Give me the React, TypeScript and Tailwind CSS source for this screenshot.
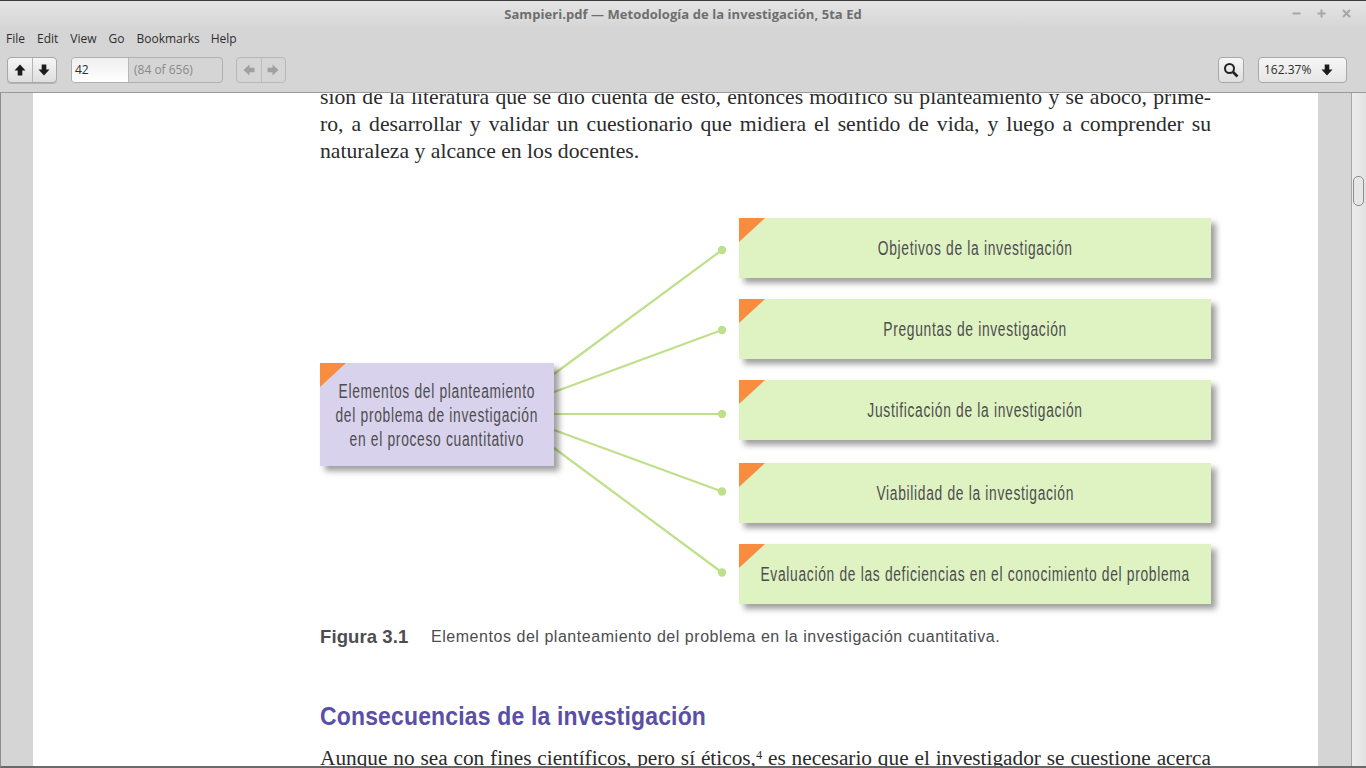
const serif = "font-['Liberation_Serif',serif]";
const narrow = "font-['Liberation_Sans',sans-serif]";

function Arrow({ dir, color = "#1c1c1c" }: { dir: "up" | "down" | "left" | "right"; color?: string }) {
  const rot = { up: 0, down: 180, left: 270, right: 90 }[dir];
  return (
    <svg width="12" height="12" viewBox="0 0 12 12" style={{ transform: `rotate(${rot}deg)` }}>
      <path d="M6 0.5 L11.5 6.5 H8.3 V11.5 H3.7 V6.5 H0.5 Z" fill={color} />
    </svg>
  );
}

function Line({ children, last }: { children: React.ReactNode; last?: boolean }) {
  return <div className={last ? "" : "[text-align:justify] [text-align-last:justify]"}>{children}</div>;
}

function GreenBox({ text, mt }: { text: string; mt: string }) {
  return (
    <div className={`relative ${mt} flex h-[60px] w-[472px] items-center justify-center bg-[#dff2c2] shadow-[5px_5px_6px_rgba(0,0,0,0.38)]`}>
      <div className="absolute left-0 top-0 h-[24px] w-[26px] bg-[#f98d3f] [clip-path:polygon(0_0,100%_0,0_100%)]" />
      <span className={`${narrow} inline-block shrink-0 scale-x-[0.69] whitespace-nowrap text-[20px] tracking-[1px] text-[#4d4d4f]`}>{text}</span>
    </div>
  );
}

export default function App() {
  const lines = [
    [554, 374, 722, 250],
    [554, 392, 722, 330],
    [554, 414, 722, 414],
    [554, 430, 722, 491.5],
    [554, 448, 722, 572.5],
  ];
  return (
    <div className="flex h-[768px] w-[1366px] flex-col overflow-hidden bg-[#d5d5d5] font-['Open_Sans',sans-serif]">
      {/* title bar */}
      <div className="relative flex h-[28px] shrink-0 items-center justify-center border-t border-[#3c3c3c] bg-gradient-to-b from-[#e4e4e4] to-[#d6d6d6]">
        <span className="text-[13px] font-bold tracking-[0.06px] text-[#6e6e6e]">Sampieri.pdf — Metodología de la investigación, 5ta Ed</span>
        <div className="absolute right-[15px] top-[8px] flex items-center gap-[16px]">
          <svg width="9" height="9" viewBox="0 0 9 9"><rect x="0.5" y="3.5" width="8" height="2" fill="#a6a6a6" /></svg>
          <svg width="9" height="9" viewBox="0 0 9 9"><path d="M3.5 0.5h2v3h3v2h-3v3h-2v-3h-3v-2h3z" fill="#a6a6a6" /></svg>
          <svg width="9" height="9" viewBox="0 0 9 9"><path d="M1 1 L8 8 M8 1 L1 8" stroke="#a6a6a6" strokeWidth="2" /></svg>
        </div>
      </div>
      {/* menu */}
      <div className="flex h-[21px] shrink-0 items-center gap-[12px] pl-[6px] text-[12px] text-[#2e2e2e]">
        <span>File</span><span>Edit</span><span>View</span><span>Go</span><span>Bookmarks</span><span className="-ml-[1px]">Help</span>
      </div>
      {/* toolbar */}
      <div className="flex h-[44px] shrink-0 items-start border-b border-[#9a9a9a] pl-[7px] pr-[19px] pt-[8px]">
        <div className="flex h-[26px] w-[50px] rounded-[4px] border border-[#a8a8a8] bg-gradient-to-b from-[#f6f6f6] to-[#dedede] shadow-[0_1px_0_rgba(0,0,0,0.15)]">
          <div className="flex flex-1 items-center justify-center border-r border-[#b5b5b5]"><Arrow dir="up" /></div>
          <div className="flex flex-1 items-center justify-center"><Arrow dir="down" /></div>
        </div>
        <div className="ml-[14px] flex h-[26px] w-[152px] rounded-[4px] border border-[#b0b0b0] text-[12px]">
          <div className="flex w-[57px] items-center rounded-l-[3px] border-r border-[#b8b8b8] bg-gradient-to-b from-[#efefef] to-white pl-[3px] text-[#2e2e2e]">42</div>
          <div className="flex flex-1 items-center pl-[5px] text-[#8a8a8a]">(84 of 656)</div>
        </div>
        <div className="ml-[13px] flex h-[26px] w-[50px] rounded-[4px] border border-[#b8b8b8]">
          <div className="flex flex-1 items-center justify-center border-r border-[#bcbcbc]"><Arrow dir="left" color="#a0a0a0" /></div>
          <div className="flex flex-1 items-center justify-center"><Arrow dir="right" color="#a0a0a0" /></div>
        </div>
        <div className="ml-auto flex h-[26px] w-[26px] items-center justify-center rounded-[4px] border border-[#a8a8a8] bg-gradient-to-b from-[#f6f6f6] to-[#dedede]">
          <svg width="16" height="16" viewBox="0 0 16 16" fill="none" stroke="#222" strokeWidth="2"><circle cx="6.5" cy="6.5" r="4.5" /><path d="M10 10 L14.5 14.5" strokeWidth="2.6" /></svg>
        </div>
        <div className="ml-[14px] flex h-[26px] w-[89px] items-center rounded-[4px] border border-[#a8a8a8] bg-gradient-to-b from-[#f6f6f6] to-[#e6e6e6] pl-[5px] text-[12px] text-[#2e2e2e]">
          <span>162.37%</span>
          <span className="ml-[10px] flex"><Arrow dir="down" /></span>
        </div>
      </div>
      {/* body */}
      <div className="flex min-h-0 flex-1 border-b-2 border-l border-[#6a6a6a] border-l-[#8c8c8c]">
        <div className="w-[32px] shrink-0" />
        <div className="h-full w-[1285px] shrink-0 overflow-hidden bg-white pl-[287px]">
          <div className="w-[891px]">
            <div className={`${serif} -mt-[9px] text-[21.7px] leading-[27px] text-[#2b2b2b]`}>
              <Line>sion de la literatura que se dio cuenta de esto, entonces modificó su planteamiento y se abocó, prime-</Line>
              <Line>ro, a desarrollar y validar un cuestionario que midiera el sentido de vida, y luego a comprender su</Line>
              <Line last>naturaleza y alcance en los docentes.</Line>
            </div>
            {/* diagram */}
            <div className="relative mt-[53px] flex h-[386px] items-start justify-between">
              <svg className="absolute left-0 top-0" width="891" height="386" viewBox="320 218 891 386">
                {lines.map(([x1, y1, x2, y2]) => (
                  <g key={y2}>
                    <line x1={x1} y1={y1} x2={x2} y2={y2} stroke="#bfe08a" strokeWidth="2.2" />
                    <circle cx={x2} cy={y2} r="4.2" fill="#bfe08a" />
                  </g>
                ))}
              </svg>
              <div className="relative mt-[145px] flex h-[103px] w-[234px] items-center justify-center bg-[#d9d2ec] shadow-[5px_5px_6px_rgba(0,0,0,0.38)]">
                <div className="absolute left-0 top-0 h-[24px] w-[26px] bg-[#f98d3f] [clip-path:polygon(0_0,100%_0,0_100%)]" />
                <div className={`${narrow} shrink-0 scale-x-[0.69] whitespace-nowrap text-center text-[20px] leading-[24px] tracking-[1px] text-[#4d4d4f]`}>
                  Elementos del planteamiento<br />del problema de investigación<br />en el proceso cuantitativo
                </div>
              </div>
              <div className="relative flex flex-col">
                <GreenBox text="Objetivos de la investigación" mt="mt-0" />
                <GreenBox text="Preguntas de investigación" mt="mt-[21px]" />
                <GreenBox text="Justificación de la investigación" mt="mt-[21px]" />
                <GreenBox text="Viabilidad de la investigación" mt="mt-[23px]" />
                <GreenBox text="Evaluación de las deficiencias en el conocimiento del problema" mt="mt-[21px]" />
              </div>
            </div>
            {/* caption */}
            <div className="mt-[21px] flex h-[24px] items-center font-['Liberation_Sans',sans-serif] text-[#4d4d4f]">
              <span className="w-[111px] text-[18.5px] font-bold tracking-[0.1px]">Figura 3.1</span>
              <span className="text-[16px] tracking-[0.54px]">Elementos del planteamiento del problema en la investigación cuantitativa.</span>
            </div>
            {/* heading */}
            <h2 className="mt-[51px] h-[33px] origin-left scale-x-[0.9] whitespace-nowrap font-['Liberation_Sans',sans-serif] text-[25.5px] font-bold leading-[33px] tracking-[0.2px] text-[#5a4fa6]">Consecuencias de la investigación</h2>
            <div className={`${serif} mt-[12px] text-[21.3px] leading-[27px] text-[#2b2b2b]`}>
              <Line>Aunque no sea con fines científicos, pero sí éticos,<sup className="text-[12.5px] leading-none">4</sup> es necesario que el investigador se cuestione acerca</Line>
            </div>
          </div>
        </div>
        <div className="w-[33px] shrink-0" />
        <div className="relative w-[15px] shrink-0 border-l border-[#a8a8a8] bg-gradient-to-r from-[#ececec] to-[#e2e2e2]">
          <div className="absolute left-[1px] top-[83px] h-[30px] w-[11px] rounded-[5px] border border-[#8e8e8e] bg-[#e6e6e6]" />
        </div>
      </div>
    </div>
  );
}
